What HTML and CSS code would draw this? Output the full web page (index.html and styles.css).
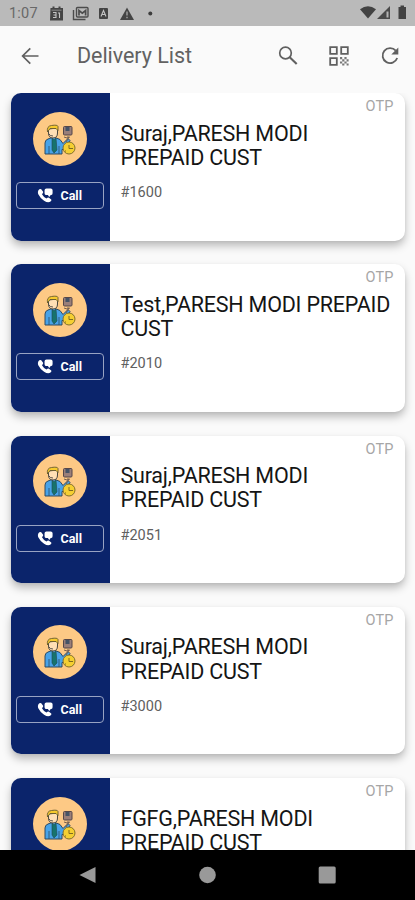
FILE: index.html
```html
<!DOCTYPE html>
<html lang="en">
<head>
<meta charset="utf-8">
<title>Delivery List</title>
<link rel="stylesheet" href="styles.css">
</head>
<body>
<svg class="defs" width="0" height="0" aria-hidden="true">
  <symbol id="courier" viewBox="0 0 54 54">
    <circle cx="27" cy="27" r="27" fill="#fdc985"/>
    <path d="M12 42V31q0-3 3-4l4-1.500h3l5 2 3 4 5-5 2 2-5 8q-1 1.500-3 1V42z" fill="#48a3e8" stroke="#2e4b63" stroke-width="1"/>
    <path d="M16 34v8M26 34v8" stroke="#2e4b63" stroke-width=".8"/>
    <path d="M19 26l2 2 2-2 1 12-3 3-2-3z" fill="#16736d" stroke="#234a50" stroke-width=".6"/>
    <path d="M15.500 17v4q0 5 4.500 5t4.500-5v-5z" fill="#ffdfb5" stroke="#4b4740" stroke-width="1"/>
    <path d="M14.500 20q-1-6 4-6.500 6-1 6.500 1v4l-2-2h-6z" fill="#f7ca2d" stroke="#655a2f" stroke-width=".9"/>
    <path d="M16 22q1 2 4 2" fill="none" stroke="#333" stroke-width=".8"/>
    <rect x="30.500" y="14.500" width="8.500" height="8.500" rx="1" fill="#9a7f79" stroke="#55474a"/>
    <path d="M32.500 15h4v4h-4z" fill="#455366"/>
    <path d="M31 25l3 1 3-1M35 24v3l-2 3" fill="none" stroke="#755e50" stroke-width="1"/>
    <circle cx="36" cy="36" r="6" fill="#f5cf32" stroke="#82702d"/>
    <path d="M36 33v3.500h4M32 39h1" fill="none" stroke="#806b20" stroke-width="1"/>
  </symbol>
  <symbol id="phone" viewBox="0 0 18 18">
    <path d="M1.500 3.500Q3 1.500 4.500 2.500L6.500 5q.5 1-1.200 2.700 1.700 3.200 4.700 4.500 1.700-1.500 2.700-.8l2.400 1.800q.8 1-1.100 2.400Q11.500 17 7.500 14.500 3 11.500 1.200 7.500.5 5.300 1.500 3.500z" fill="#fff"/>
    <path d="M10 1.500h4.500q2 0 2 2v3q0 2-2 2l-1.500 2-1.500-2H10q-2 0-2-2v-3q0-2 2-2z" fill="#fff"/>
  </symbol>
</svg>
<div class="screen">
  <header class="status">
    <span class="time">1:07</span>
    <svg class="notices" width="106" height="16" viewBox="0 0 106 16">
      <path d="M1.500 2h2V.500h2V2h4V.500h2V2H14v12.500H1z" fill="#444"/>
      <path d="M2.500 4.200h10" stroke="#888"/>
      <path d="M4 6.500h3v5H4M4.500 9H7M9 7h1.500v5" fill="none" stroke="#c4c4c4" stroke-width="1.100"/>
      <rect x="27.500" y="1.500" width="11.500" height="9.500" rx="1" fill="none" stroke="#4c4c4c" stroke-width="1.400"/>
      <path d="M24.500 4v9.500h12" fill="none" stroke="#4c4c4c" stroke-width="1.400"/>
      <path d="M30 9.500V4.500l3.300 2.700 3.300-2.700v5" fill="none" stroke="#4c4c4c" stroke-width="1.700"/>
      <rect x="50" y="2" width="9" height="11" rx="1" fill="#444"/>
      <path d="M52 10.500l2.500-6 2.500 6M53 8.500h3" fill="none" stroke="#c4c4c4" stroke-width="1.100"/>
      <path d="M78 1.500L85 14H71z" fill="#444"/>
      <path d="M78 5.500v4M78 10.700v1.500" stroke="#aaa" stroke-width="1.300"/>
      <circle cx="101.300" cy="7.500" r="2" fill="#3d3d3d"/>
    </svg>
    <svg class="signals" width="48" height="16" viewBox="0 0 48 16">
      <path d="M0 4.200Q8-1.800 16 4.200L8 13.500z" fill="#424242"/>
      <path d="M17 14L30 1v13z" fill="#4a4a4a"/>
      <path d="M26.500 6.500h2v6h-2z" fill="#b4b4b4"/>
      <path d="M38.500 2h2V.500h3.500V2h2v12h-7.500z" fill="#424242"/>
    </svg>
  </header>
  <nav class="appbar">
    <svg class="back" width="18" height="18" viewBox="0 0 18 18"><path d="M17.500 9H1.800M9.300 1.300L1.600 9l7.700 7.700" fill="none" stroke="#606060" stroke-width="1.700"/></svg>
    <h1>Delivery List</h1>
    <div class="actions">
      <svg width="20" height="20" viewBox="0 0 20 20"><circle cx="7.500" cy="7" r="5.800" fill="none" stroke="#606060" stroke-width="1.700"/><path d="M11.700 11.200L18.700 18" stroke="#606060" stroke-width="2.100"/></svg>
      <svg width="20" height="20" viewBox="0 0 20 20"><path d="M1.200 1.200h6.600v6.600H1.200zM12.200 1.200h6.600v6.600h-6.600zM1.200 12.200h6.600v6.600H1.200z" fill="none" stroke="#606060" stroke-width="1.800"/><path d="M11 11h2.200v2.200H11zM13.200 13.200h2.200v2.200h-2.200zM15.400 11h2.200v2.200h-2.200zM11 15.400h2.200v2.200H11zM15.400 15.400h2.200v2.200h-2.200zM17.600 13.200h2v2.200h-2zM13.200 17.600h2.200v2h-2.200zM17.600 17.600h2v2h-2z" fill="#777"/></svg>
      <svg width="20" height="20" viewBox="0 0 20 20"><path d="M15.800 4.700A7.500 7.500 0 1 0 17.200 12" fill="none" stroke="#606060" stroke-width="1.800"/><path d="M18.300 1.500V8.500h-7z" fill="#606060"/></svg>
    </div>
  </nav>
  <main class="list">
    <article class="card">
      <div class="side"><svg class="avatar"><use href="#courier"/></svg><button class="call"><svg class="phone"><use href="#phone"/></svg>Call</button></div>
      <div class="info"><span class="otp">OTP</span><h2>Suraj,PARESH MODI<br>PREPAID CUST</h2><p>#1600</p></div>
    </article>
    <article class="card">
      <div class="side"><svg class="avatar"><use href="#courier"/></svg><button class="call"><svg class="phone"><use href="#phone"/></svg>Call</button></div>
      <div class="info"><span class="otp">OTP</span><h2>Test,PARESH MODI PREPAID<br>CUST</h2><p>#2010</p></div>
    </article>
    <article class="card">
      <div class="side"><svg class="avatar"><use href="#courier"/></svg><button class="call"><svg class="phone"><use href="#phone"/></svg>Call</button></div>
      <div class="info"><span class="otp">OTP</span><h2>Suraj,PARESH MODI<br>PREPAID CUST</h2><p>#2051</p></div>
    </article>
    <article class="card">
      <div class="side"><svg class="avatar"><use href="#courier"/></svg><button class="call"><svg class="phone"><use href="#phone"/></svg>Call</button></div>
      <div class="info"><span class="otp">OTP</span><h2>Suraj,PARESH MODI<br>PREPAID CUST</h2><p>#3000</p></div>
    </article>
    <article class="card">
      <div class="side"><svg class="avatar"><use href="#courier"/></svg></div>
      <div class="info"><span class="otp">OTP</span><h2>FGFG,PARESH MODI<br>PREPAID CUST</h2></div>
    </article>
  </main>
  <footer class="navbar">
    <svg width="18" height="18" viewBox="0 0 18 18"><path d="M17.500 1v16L1.500 9z" fill="#999"/></svg>
    <svg width="18" height="18" viewBox="0 0 18 18"><circle cx="9.500" cy="9" r="8.300" fill="#999"/></svg>
    <svg width="18" height="18" viewBox="0 0 18 18"><rect x=".7" y=".5" width="17" height="17" rx="1.500" fill="#999"/></svg>
  </footer>
</div>
</body>
</html>
```
FILE: styles.css
```css
* { box-sizing: border-box; }
body { margin: 0; font-family: Roboto, "Liberation Sans", sans-serif; }
svg { display: block; flex: none; }
h1, h2, p { margin: 0; font-weight: 400; }
.defs { position: absolute; }
.screen { width: 415px; height: 900px; display: flex; flex-direction: column; overflow: hidden; background: #fafafa; }
.status { height: 25.500px; flex: none; display: flex; align-items: center; padding: 1px 7px 0 9px; background: #bababa; }
.time { width: 40px; font-size: 14.500px; letter-spacing: .2px; color: #686868; }
.signals { margin-left: auto; }
.status .notices { margin-top: 1px; }
.appbar { height: 67.500px; flex: none; display: flex; align-items: center; padding: 0 15px 7px 21px; }
.appbar h1 { margin-left: 38px; font-size: 21.500px; letter-spacing: -.05px; color: #626262; }
.actions { margin-left: auto; display: flex; gap: 31px; }
.list { flex: 1; min-height: 0; overflow: hidden; display: flex; flex-direction: column; gap: 23.800px; padding: 0 10px 0 11px; }
.card { height: 147.500px; flex: none; display: flex; border-radius: 10px; background: #fff; box-shadow: 0 5px 8px rgba(0, 0, 0, .25), 0 1px 3px rgba(0, 0, 0, .06); }
.side { width: 98.500px; flex: none; display: flex; flex-direction: column; align-items: center; padding-top: 18.500px; border-radius: 10px 0 0 10px; background: #0b246b; }
.avatar { width: 54px; height: 54px; }
.call { width: 88px; height: 27px; margin-top: 16.500px; padding: 0 2px 0 0; display: flex; align-items: center; justify-content: center; gap: 7px; border: 1px solid #98a3c3; border-radius: 4px; background: transparent; color: #fff; font: 700 12.500px Roboto, "Liberation Sans", sans-serif; }
.phone { width: 17px; height: 17px; }
.info { flex: 1; min-width: 0; display: flex; flex-direction: column; padding: 5px 11.500px 0 11px; }
.otp { align-self: flex-end; font-size: 14.500px; line-height: 17px; letter-spacing: .1px; color: #a6a6a6; }
.info h2 { margin-top: 6.500px; font-size: 21.500px; line-height: 24.300px; letter-spacing: -.21px; color: #151515; white-space: nowrap; }
.info p { margin-top: 14px; font-size: 14.500px; line-height: 17px; color: #606060; }
.navbar { height: 50px; flex: none; display: flex; align-items: center; justify-content: space-between; padding: 0 79px 0 78px; background: #000; }
```
